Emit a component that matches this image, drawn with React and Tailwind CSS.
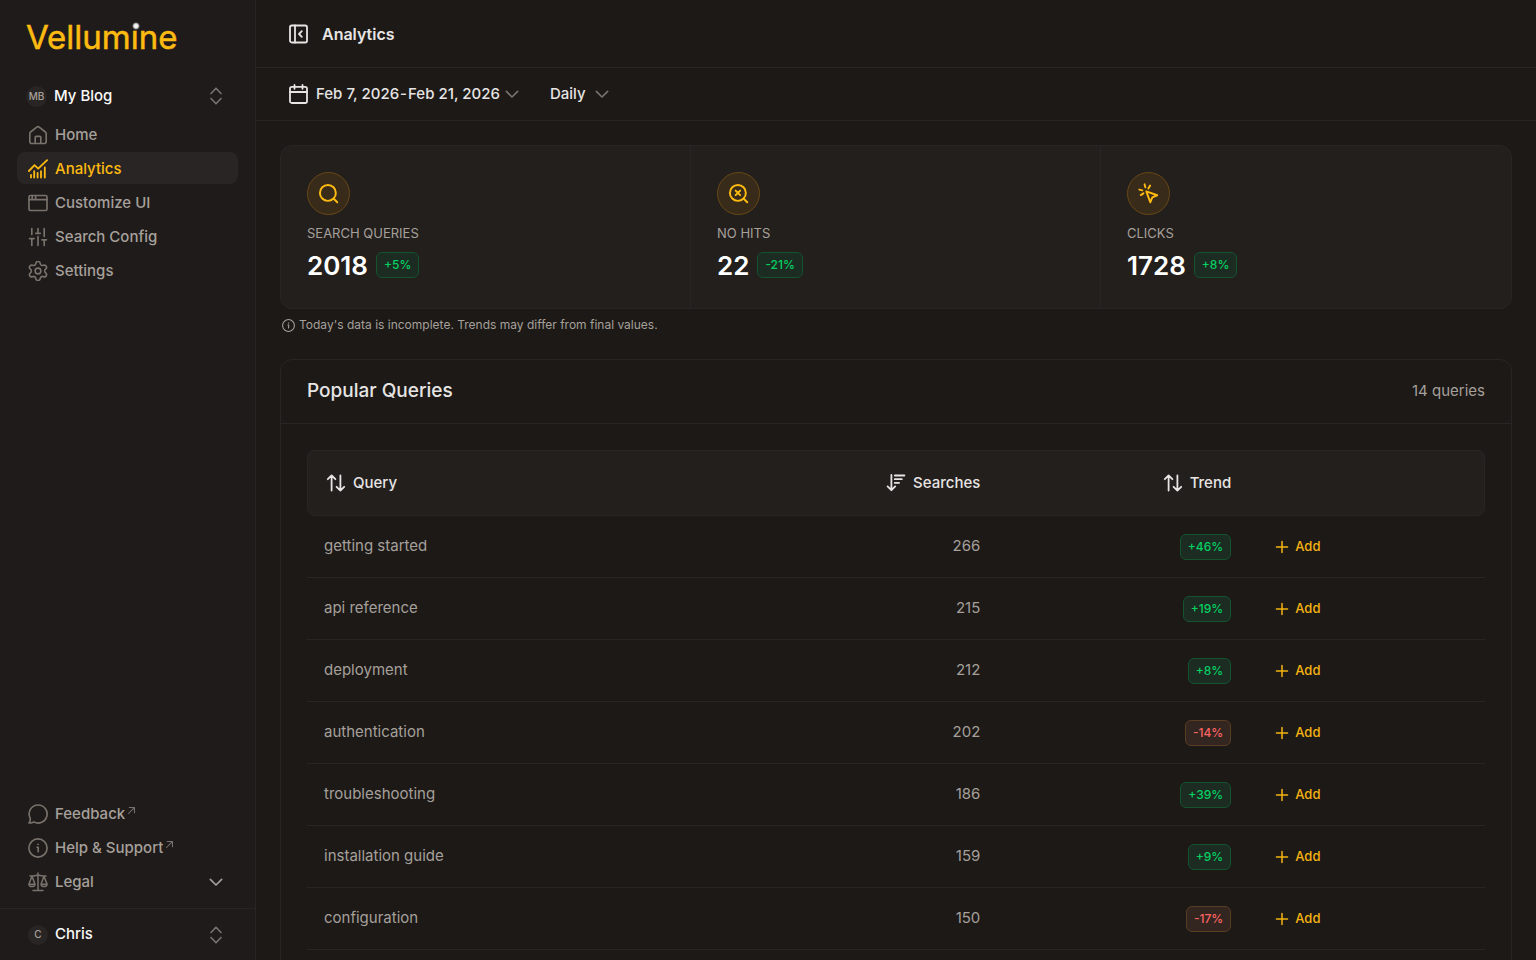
const Svg = ({ size = 20, sw = 1.65, className = "", children, box = 24 }) => (
  <svg width={size} height={size} viewBox={`0 0 ${box} ${box}`} fill="none" stroke="currentColor" strokeWidth={sw} strokeLinecap="round" strokeLinejoin="round" className={`shrink-0 ${className}`} aria-hidden="true">
    {children}
  </svg>
);

const HomeIcon = () => (
  <Svg box={20}>
    <path d="M1.8 8.6v7.9a2 2 0 0 0 2 2h12.4a2 2 0 0 0 2-2V8.6a2 2 0 0 0-.8-1.6l-6.2-4.9a2 2 0 0 0-2.4 0L2.6 7a2 2 0 0 0-.8 1.6Z" />
    <path d="M7.2 18.3v-6a1 1 0 0 1 1-1h3.6a1 1 0 0 1 1 1v6" />
  </Svg>
);
const AnalyticsIcon = () => (
  <Svg box={20} sw={1.8}>
    <path d="M.9 12 6.500 6.200l3.700 3.400L19.100 1.200" />
    <path d="M3 16v2.600M6.200 12.200v6.400M9.600 14v4.600M13 12.200v6.400M16.800 8.500v10.100" />
  </Svg>
);
const WindowIcon = () => (
  <Svg box={20}>
    <rect x="1" y="2.500" width="18" height="15" rx="1.500" />
    <path d="M1 6.600h18M4.200 2.800v3.600M7.600 2.800v3.600" />
  </Svg>
);
const SlidersIcon = () => (
  <Svg box={20}>
    <path d="M3.800 1.600v6M3.800 11.600v6.900M1.500 11.600h4.600M10 1.600v4.600M7.700 6.300h4.600M10 9.500v9M16.200 1.600v7.800M16.200 12.800v5.700M13.900 12.800h4.600" />
  </Svg>
);
const GearIcon = () => (
  <svg width="20" height="20" viewBox="1.5 1.5 21 21" fill="none" stroke="currentColor" strokeWidth="1.7" strokeLinecap="round" strokeLinejoin="round" className="shrink-0" aria-hidden="true">
    <path d="M9.671 4.136a2.34 2.34 0 0 1 4.659 0 2.34 2.34 0 0 0 3.319 1.915 2.34 2.34 0 0 1 2.33 4.033 2.34 2.34 0 0 0 0 3.831 2.34 2.34 0 0 1-2.33 4.033 2.34 2.34 0 0 0-3.319 1.915 2.34 2.34 0 0 1-4.659 0 2.34 2.34 0 0 0-3.32-1.915 2.34 2.34 0 0 1-2.33-4.033 2.34 2.34 0 0 0 0-3.831A2.34 2.34 0 0 1 6.35 6.051a2.34 2.34 0 0 0 3.319-1.915" />
    <circle cx="12" cy="12" r="3" />
  </svg>
);
const ChatIcon = () => (
  <Svg box={20}>
    <path d="M10.200 1a9 9 0 1 1-4.400 16.900c-1 .7-2.800 1.200-4.800 1 1-.8 1.300-2 1.300-4.500A9 9 0 0 1 10.200 1Z" />
  </Svg>
);
const InfoIcon = ({ size = 20 }) => (
  <Svg box={20} size={size}>
    <circle cx="10" cy="10" r="9.100" />
    <path d="M9 9.200h1.200v4.600" />
    <circle cx="10" cy="6.300" r=".6" fill="currentColor" strokeWidth=".6" />
  </Svg>
);
const ScaleIcon = () => (
  <Svg box={20} sw={1.5}>
    <path d="M10 1v17.300M5 18.500h10M2 4h3.500L10 3l4.500 1H18M4 4.200.9 12.300M4 4.200l3 8.100M16 4.200l-3 8.100M16 4.200l3.100 8.100M.9 12.300a3.100 2.800 0 0 0 6.100 0ZM13 12.300a3.100 2.800 0 0 0 6.100 0Z" />
  </Svg>
);
const UpDown = () => (
  <Svg size={20} sw={2} className="text-stone-500">
    <path d="m6 9 6-6.300L18 9M6 15l6 6.300 6-6.300" />
  </Svg>
);
const Chevron = ({ className = "" }) => (
  <Svg size={16} sw={2.500} className={className}>
    <path d="m3.500 8 8.500 8.500L20.500 8" />
  </Svg>
);
const ArrowOut = () => (
  <Svg size={9} sw={2.800} className="mb-2 ml-0.5 text-stone-500">
    <path d="M4 20 19 5M6 4h14v14" />
  </Svg>
);
const PanelIcon = () => (
  <Svg box={20} sw={1.800}>
    <rect x="2" y="1.500" width="17" height="17" rx="1.800" />
    <path d="M7 1.500v17M13.800 7.200 11 10l2.800 2.800" />
  </Svg>
);
const CalendarIcon = () => (
  <Svg box={20} sw={1.800}>
    <rect x="2" y="2.800" width="17" height="16.200" rx="1.800" />
    <path d="M2 8h17M6.500.9v3.900M14.500.9v3.900" />
  </Svg>
);
const SortIcon = () => (
  <Svg box={20} sw={1.800}>
    <path d="M5.600 17.500V2.500M1.800 6.200l3.800-3.800 3.800 3.800M14.400 2.500v15M10.600 13.800l3.800 3.800 3.800-3.800" />
  </Svg>
);
const SortDescIcon = () => (
  <Svg box={20} sw={1.800}>
    <path d="M5.400 2v15.200M1.600 13.400l3.800 3.800 3.800-3.800M8.800 2.500h9.600M8.800 6.200h7M8.800 9.900h4.200" />
  </Svg>
);
const SearchIcon = () => (
  <Svg sw={2.200} size={21}>
    <circle cx="11.300" cy="11.300" r="9.100" />
    <path d="m18 18 4 4" />
  </Svg>
);
const SearchXIcon = () => (
  <Svg sw={2.200} size={21}>
    <circle cx="11.300" cy="11.300" r="9.100" />
    <path d="m18 18 4 4M8.700 8.700l5.200 5.200M13.900 8.700l-5.200 5.200" />
  </Svg>
);
const ClickIcon = () => (
  <Svg sw={2.200} size={21}>
    <path d="m9.500 9.500 12.500 4.500-5.600 2.400L14 22ZM7.500 1.500l.9 3.500M1.500 7.500l3.500.9M13.800 3l-2 3.200M3.200 13.800l3-2" />
  </Svg>
);

const nav = [
  ["Home", HomeIcon],
  ["Analytics", AnalyticsIcon],
  ["Customize UI", WindowIcon],
  ["Search Config", SlidersIcon],
  ["Settings", GearIcon],
];
const stats = [
  ["Search Queries", "2018", "+5%", SearchIcon],
  ["No Hits", "22", "-21%", SearchXIcon],
  ["Clicks", "1728", "+8%", ClickIcon],
];
const queries = [
  ["getting started", 266, "+46%"],
  ["api reference", 215, "+19%"],
  ["deployment", 212, "+8%"],
  ["authentication", 202, "-14%"],
  ["troubleshooting", 186, "+39%"],
  ["installation guide", 159, "+9%"],
  ["configuration", 150, "-17%"],
];

const Badge = ({ children, good }) => (
  <span className={`inline-flex h-[26px] items-center rounded-md border px-[7px] align-middle text-xs font-medium ${good ? "border-[#14532f] bg-[#1c2c22] text-[#05d062]" : "border-[#5a3c20] bg-[#332620] text-[#fa6463]"}`}>
    {children}
  </span>
);

const Sidebar = () => (
  <aside className="flex w-64 shrink-0 flex-col border-r border-[#292524] bg-[#1f1b1a]">
    <a href="#home" className="mt-[18px] ml-[26px] block w-[156px]" aria-label="Vellumine home">
      <svg viewBox="0 0 156 38" className="block h-[38px] w-full overflow-visible" role="img">
        <defs>
          <radialGradient id="spark">
            <stop offset="0" stopColor="#fff" />
            <stop offset=".5" stopColor="#fff" stopOpacity=".9" />
            <stop offset="1" stopColor="#fff" stopOpacity="0" />
          </radialGradient>
        </defs>
        <text x="0" y="31" fill="#fdbb12" fontSize="33" fontWeight="400" stroke="#fdbb12" strokeWidth=".5" fontFamily="Inter, sans-serif">Vellumine</text>
        <rect x="105" y="3" width="9" height="8" fill="#1f1b1a" />
        <circle cx="110" cy="8" r="4" fill="url(#spark)" />
      </svg>
    </a>
    <button type="button" className="mt-6 flex h-8 items-center pr-[29px] pl-[26px] text-[15px] font-medium text-stone-50">
      <span className="mr-[7px] flex size-[21px] items-center justify-center rounded-full bg-[#292524] text-[10px] text-stone-400">MB</span>
      My Blog
      <span className="ml-auto"><UpDown /></span>
    </button>
    <nav className="mt-[6px] flex flex-col gap-0.5 px-[17px]">
      {nav.map(([label, Icon]) => (
        <a key={label} href="#nav" className={`flex h-8 items-center gap-[7px] rounded-lg px-[11px] pt-0.5 text-[15px] font-medium ${label === "Analytics" ? "bg-[#292524] text-[#fdbb12]" : "text-stone-500"}`}>
          <Icon />
          <span className={label === "Analytics" ? "" : "text-stone-400"}>{label}</span>
        </a>
      ))}
    </nav>
    <div className="mt-auto flex flex-col gap-0.5 px-[17px] pb-[10px] text-[15px] font-medium text-stone-500">
      <a href="#feedback" className="flex h-8 items-center px-[11px]"><ChatIcon /><span className="ml-[7px] text-stone-400">Feedback</span><ArrowOut /></a>
      <a href="#help" className="flex h-8 items-center px-[11px]"><InfoIcon /><span className="ml-[7px] text-stone-400">Help &amp; Support</span><ArrowOut /></a>
      <button type="button" className="flex h-8 items-center px-[11px]"><ScaleIcon /><span className="ml-[7px] text-stone-400">Legal</span><Chevron className="mr-[3px] ml-auto text-stone-400" /></button>
    </div>
    <button type="button" className="flex h-[52px] items-center border-t border-[#292524] pr-[29px] pl-[28px] text-[15px] font-medium text-stone-50">
      <span className="mr-[7px] flex size-5 items-center justify-center rounded-full bg-[#292524] text-[10px] text-stone-400">C</span>
      Chris
      <span className="ml-auto"><UpDown /></span>
    </button>
  </aside>
);

export default function App() {
  return (
    <div className="flex h-screen overflow-hidden bg-[#1c1917] font-['Inter','Liberation_Sans',sans-serif] text-stone-200">
      <Sidebar />
      <main className="flex min-w-0 flex-1 flex-col">
        <header className="flex h-[68px] shrink-0 items-center gap-[14px] border-b border-[#292524] px-8">
          <button type="button" aria-label="Collapse sidebar"><PanelIcon /></button>
          <h1 className="text-base font-semibold">Analytics</h1>
        </header>
        <div className="flex h-[53px] shrink-0 items-center gap-[30px] border-b border-[#292524] px-8 text-[15px] font-medium">
          <button type="button" className="flex items-center"><CalendarIcon /><span className="ml-2 flex gap-px"><span>Feb 7, 2026</span><span>-</span><span>Feb 21, 2026</span></span><Chevron className="ml-1 text-stone-500" /></button>
          <button type="button" className="flex items-center">Daily<Chevron className="ml-2 text-stone-500" /></button>
        </div>
        <div className="min-h-0 flex-1 overflow-y-auto px-6 py-6 [scrollbar-width:none]">
          <section className="grid grid-cols-3 divide-x divide-[#292524] rounded-xl border border-[#292524] bg-[#231f1d]">
            {stats.map(([label, value, change, Icon]) => (
              <div key={label} className="px-[26px] pt-[26px] pb-[25px]">
                <span className="flex size-[43px] items-center justify-center rounded-full border border-[#694816] bg-[#382b19] text-[#fdbb12]"><Icon /></span>
                <h2 className="mt-2 text-[13px] leading-5 text-stone-400 uppercase">{label}</h2>
                <div className="mt-1 flex h-9 items-center gap-2">
                  <span className="text-[26px] font-semibold text-white">{value}</span>
                  <Badge good>{change}</Badge>
                </div>
              </div>
            ))}
          </section>
          <p className="mt-[6px] flex h-5 items-center gap-1 pl-0.5 text-xs text-stone-400"><InfoIcon size={13} />Today's data is incomplete. Trends may differ from final values.</p>
          <section className="mt-6 rounded-xl border border-[#292524]">
            <div className="flex h-16 items-center justify-between border-b border-[#292524] px-[26px]">
              <h2 className="text-[19px] font-medium">Popular Queries</h2>
              <span className="text-[15px] text-stone-400">14 queries</span>
            </div>
            <div className="p-[26px]">
              <table className="w-full table-fixed border-separate border-spacing-0 text-[15px]">
                <colgroup><col className="w-[39%]" /><col /><col className="w-[21.3%]" /><col className="w-[20.1%]" /></colgroup>
                <thead>
                  <tr className="h-[66px] bg-[#231f1d]">
                    <th className="rounded-l-lg border-y border-l border-[#292524] pl-[18px] font-medium"><button type="button" className="flex items-center gap-[7px]"><SortIcon />Query</button></th>
                    <th className="border-y border-[#292524] pr-[17px] font-medium"><button type="button" className="ml-auto flex items-center gap-[7px]"><SortDescIcon />Searches</button></th>
                    <th className="border-y border-[#292524] pr-[17px] font-medium"><button type="button" className="ml-auto flex items-center gap-[7px]"><SortIcon />Trend</button></th>
                    <th className="rounded-r-lg border-y border-r border-[#292524]" aria-label="Actions"></th>
                  </tr>
                </thead>
                <tbody>
                  {queries.map(([q, n, t]) => (
                    <tr key={q} className="h-[62px] text-stone-400">
                      <td className="border-b border-[#292524] pl-[17px]">{q}</td>
                      <td className="border-b border-[#292524] pr-[17px] text-right">{n}</td>
                      <td className="border-b border-[#292524] pr-[17px] text-right"><Badge good={t[0] === "+"}>{t}</Badge></td>
                      <td className="border-b border-[#292524] pl-[27px]"><button type="button" className="flex items-center gap-[6px] text-[13px] font-medium text-[#f5b312]"><Svg size={14} sw={2.600}><path d="M12 2.500v19M2.500 12h19" /></Svg>Add</button></td>
                    </tr>
                  ))}
                </tbody>
              </table>
            </div>
          </section>
        </div>
      </main>
    </div>
  );
}
